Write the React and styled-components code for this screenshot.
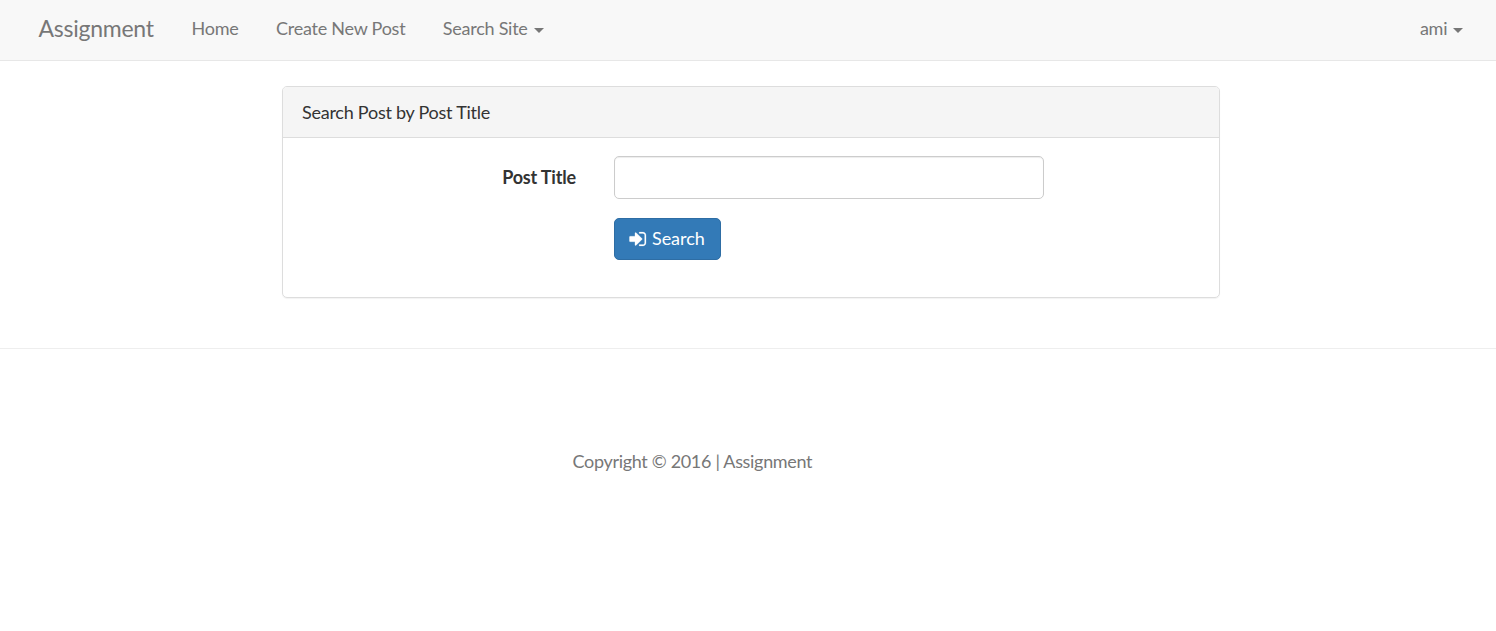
import React from 'react';
import styled, { createGlobalStyle } from 'styled-components';

const GlobalStyle = createGlobalStyle`
  *, *::before, *::after { box-sizing: border-box; }
  body {
    margin: 0;
    background: #fff;
    color: #333;
    font-family: Lato, sans-serif;
    font-size: 18px;
    letter-spacing: -0.25px;
    line-height: 25px;
  }
`;

const Navbar = styled.nav`
  display: flex;
  align-items: center;
  height: 61px;
  padding: 0 14px 3px 19px;
  background: #f8f8f8;
  border-bottom: 1px solid #e7e7e7;
`;

const Brand = styled.a`
  padding: 0 19px 0 19.5px;
  font-size: 23px;
  letter-spacing: -0.25px;
  color: #777;
`;

const NavLink = styled.a`
  display: flex;
  align-items: center;
  padding: 0 18.75px;
  color: #777;
  margin-left: ${(p) => (p.$right ? 'auto' : '0')};
`;

const Caret = styled.span`
  margin: 4px 0 0 6px;
  border-top: 5px solid #777;
  border-left: 5px solid transparent;
  border-right: 5px solid transparent;
`;

const Panel = styled.section`
  width: 938px;
  height: 212px;
  margin: 25px 0 0 282px;
  border: 1px solid #ddd;
  border-radius: 5px;
  box-shadow: 0 1px 1px rgba(0, 0, 0, 0.05);
`;

const PanelHeading = styled.header`
  height: 51px;
  padding: 13px 19px;
  background: #f5f5f5;
  border-bottom: 1px solid #ddd;
  border-radius: 4px 4px 0 0;
`;

const SearchForm = styled.form`
  display: grid;
  grid-template-columns: 293px 430px;
  column-gap: 38px;
  row-gap: 19px;
  padding-top: 18px;
`;

const Label = styled.label`
  padding-top: 9px;
  text-align: right;
  font-weight: 700;
  letter-spacing: -0.17px;
`;

const TextInput = styled.input`
  height: 43px;
  padding: 7px 15px;
  border: 1px solid #ccc;
  border-radius: 5px;
  font: inherit;
  box-shadow: inset 0 1px 1px rgba(0, 0, 0, 0.075);
`;

const SearchButton = styled.button`
  grid-column: 2;
  justify-self: start;
  display: flex;
  align-items: center;
  gap: 5px;
  width: 107px;
  height: 42px;
  padding: 0 14px 1px;
  color: #fff;
  background: #337ab7;
  border: 1px solid #2e6da4;
  border-radius: 5px;
  font: inherit;
  letter-spacing: -0.05px;
`;

const SignInIcon = styled.svg`
  flex: none;
  width: 18px;
  height: 18px;
  fill: currentColor;
  stroke: currentColor;
  stroke-width: 20;
`;

const Divider = styled.hr`
  margin: 50px 0 0;
  border: 0;
  border-top: 1px solid #eee;
`;

const Copyright = styled.footer`
  padding: 100px 0 0 572.5px;
  color: #777;
  letter-spacing: -0.32px;
`;

export default function App() {
  return (
    <>
      <GlobalStyle />
      <Navbar>
        <Brand>Assignment</Brand>
        <NavLink>Home</NavLink>
        <NavLink>Create New Post</NavLink>
        <NavLink>Search Site<Caret /></NavLink>
        <NavLink $right>ami<Caret /></NavLink>
      </Navbar>
      <Panel>
        <PanelHeading>Search Post by Post Title</PanelHeading>
        <SearchForm onSubmit={(e) => e.preventDefault()}>
          <Label htmlFor="title">Post Title</Label>
          <TextInput id="title" />
          <SearchButton>
            <SignInIcon viewBox="90 64 1664 1664" aria-hidden="true">
              <path d="M1312 896q0 26-19 45l-544 544q-19 19-45 19t-45-19-19-45v-288h-448q-26 0-45-19t-19-45v-384q0-26 19-45t45-19h448v-288q0-26 19-45t45-19 45 19l544 544q19 19 19 45zm352-352v704q0 119-84.5 203.5t-203.5 84.5h-320q-13 0-22.5-9.5t-9.5-22.5q0-4-1-20t-.5-26.5 3-23.5 10-19.5 20.5-6.5h320q66 0 113-47t47-113v-704q0-66-47-113t-113-47h-312l-11.5-1-11.5-3-8-5.5-7-9-2-13.5q0-4-1-20t-.5-26.5 3-23.5 10-19.5 20.5-6.5h320q119 0 203.5 84.5t84.5 203.5z" />
            </SignInIcon>
            Search
          </SearchButton>
        </SearchForm>
      </Panel>
      <Divider />
      <Copyright>Copyright © 2016 | Assignment</Copyright>
    </>
  );
}
